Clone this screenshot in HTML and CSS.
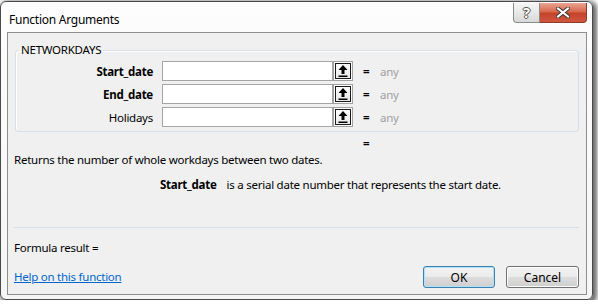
FILE: index.html
```html
<!DOCTYPE html>
<html lang="en">
<head>
  <meta charset="UTF-8">
  <title>Function Arguments</title>
  <link rel="stylesheet" href="styles.css">
</head>
<body>
  <div class="window">
    <!-- Title bar -->
    <div class="titlebar">
      <span class="title">Function Arguments</span>
      <div class="caption-buttons">
        <span class="cap-btn help-btn">?</span>
        <span class="cap-btn close-btn">
          <svg width="14" height="11" viewBox="0 0 14 11">
            <path d="M2 1.5 L12 9.5 M12 1.5 L2 9.5" stroke="#3a3a3a" stroke-width="4" stroke-linecap="square"/>
            <path d="M2 1.5 L12 9.5 M12 1.5 L2 9.5" stroke="#fff" stroke-width="2" stroke-linecap="square"/>
          </svg>
        </span>
      </div>
    </div>

    <div class="client">
      <fieldset class="args">
        <legend>NETWORKDAYS</legend>
        <div class="arg-row">
          <span class="arg-name bold">Start_date</span>
          <div class="arg-input">
            <span class="field"></span>
            <span class="ref-btn"><span class="ref-inner">
              <svg width="10" height="12" viewBox="0 0 10 12"><path d="M5 0 L9.5 5 L6.5 5 L6.5 9 L3.5 9 L3.5 5 L0.5 5 Z" fill="#000"/><rect x="0.5" y="10.5" width="9" height="1.5" fill="#000"/></svg>
            </span></span>
          </div>
          <span class="eq">=</span>
          <span class="arg-value">any</span>
        </div>
        <div class="arg-row">
          <span class="arg-name bold">End_date</span>
          <div class="arg-input">
            <span class="field"></span>
            <span class="ref-btn"><span class="ref-inner">
              <svg width="10" height="12" viewBox="0 0 10 12"><path d="M5 0 L9.5 5 L6.5 5 L6.5 9 L3.5 9 L3.5 5 L0.5 5 Z" fill="#000"/><rect x="0.5" y="10.5" width="9" height="1.5" fill="#000"/></svg>
            </span></span>
          </div>
          <span class="eq">=</span>
          <span class="arg-value">any</span>
        </div>
        <div class="arg-row">
          <span class="arg-name">Holidays</span>
          <div class="arg-input">
            <span class="field"></span>
            <span class="ref-btn"><span class="ref-inner">
              <svg width="10" height="12" viewBox="0 0 10 12"><path d="M5 0 L9.5 5 L6.5 5 L6.5 9 L3.5 9 L3.5 5 L0.5 5 Z" fill="#000"/><rect x="0.5" y="10.5" width="9" height="1.5" fill="#000"/></svg>
            </span></span>
          </div>
          <span class="eq">=</span>
          <span class="arg-value">any</span>
        </div>
      </fieldset>

      <div class="result-eq">=</div>
      <p class="desc">Returns the number of whole workdays between two dates.</p>
      <p class="arg-help"><b>Start_date</b><span>is a serial date number that represents the start date.</span></p>

      <div class="sep"></div>

      <div class="formula">Formula result =</div>
      <div class="footer">
        <a href="#" class="help-link">Help on this function</a>
        <div class="buttons">
          <button class="btn btn-default">OK</button>
          <button class="btn">Cancel</button>
        </div>
      </div>
    </div>
  </div>
</body>
</html>
```

FILE: styles.css
```css
/* Page */
body {
  margin: 0;
  padding: 1px 0 0 0;
  background: #fff;
  font-family: "Noto Sans", "Open Sans", sans-serif;
  font-size: 11.5px;
  letter-spacing: -0.25px;
  color: #000;
}

/* Dialog frame */
.window {
  width: 593px;
  height: 299px;
  box-sizing: border-box;
  border: 1px solid #4a4a4a;
  border-radius: 6px;
  background: linear-gradient(#fdfdfd, #f6f6f6);
  padding: 0 5px 4px 6px;
  box-shadow: 2px 2px 5px 2px rgba(0, 0, 0, 0.6);
  display: flex;
  flex-direction: column;
}

.titlebar {
  height: 30px;
  display: flex;
  justify-content: space-between;
  align-items: flex-start;
}

.title {
  margin-top: 10px;
  margin-left: 2px;
  line-height: 16px;
  font-size: 12px;
}

.caption-buttons {
  display: flex;
  margin-top: 1px;
}

.cap-btn {
  height: 20px;
  box-sizing: border-box;
  display: flex;
  align-items: center;
  justify-content: center;
}

.help-btn {
  width: 27px;
  border: 1px solid #8a8a8a;
  border-top: none;
  border-radius: 0 0 0 4px;
  background: linear-gradient(#f6f6f6, #d9d9d9);
  font-weight: bold;
  font-size: 14px;
  color: #fff;
  text-shadow: 1px 0 0 #555, -1px 0 0 #555, 0 1px 0 #555, 0 -1px 0 #555;
}

.close-btn {
  width: 47px;
  border: 1px solid #8c3a2a;
  border-top: none;
  border-left: none;
  border-radius: 0 0 4px 0;
  background: linear-gradient(#eaa593 0%, #d8694f 45%, #c4432b 55%, #d0573f 100%);
}

/* Client area */
.client {
  flex: 1;
  border: 1px solid #8e8e8e;
  background: #f0f0f0;
  display: flex;
  flex-direction: column;
}

/* Argument group box */
.args {
  margin: 9px 7px 0 7px;
  padding: 3px 0 4px 0;
  border: 1px solid #d5dfe5;
  border-radius: 3px;
  box-shadow: inset 1px 1px 0 #fff;
  display: flex;
  flex-direction: column;
  gap: 3px;
}

.args legend {
  margin-left: 3px;
  padding: 0 2px;
  line-height: 16px;
}

.arg-row {
  display: flex;
  align-items: center;
  height: 20px;
}

.arg-name {
  width: 137px;
  margin-right: 9px;
  text-align: right;
}

.bold {
  font-weight: bold;
}

.arg-input {
  width: 191px;
  height: 20px;
  display: flex;
}

.field {
  flex: 1;
  border: 1px solid #a5a5a5;
  background: #fff;
}

.ref-btn {
  width: 20px;
  height: 20px;
  box-sizing: border-box;
  border: 1px solid #a0a0a0;
  padding: 1px;
  background: #fff;
}

.ref-inner {
  display: flex;
  align-items: center;
  justify-content: center;
  height: 100%;
  box-sizing: border-box;
  border: 1px solid #1a1a1a;
  background: linear-gradient(#fdfdfd, #e8e8e8);
}

.eq {
  margin-left: 10px;
  width: 17px;
  font-weight: bold;
}

.arg-value {
  color: #a0a0a0;
}

/* Description text */
.result-eq {
  margin: 4px 0 0 355px;
  line-height: 16px;
  font-weight: bold;
}

.desc {
  margin: 0 0 0 6px;
  line-height: 16px;
}

.arg-help {
  margin: 9px 0 0 152px;
  line-height: 16px;
}

.arg-help span {
  margin-left: 10px;
}

.sep {
  margin: 34px 7px 0 6px;
  height: 1px;
  background: #d5dfe5;
}

.formula {
  margin: 12px 0 0 6px;
  line-height: 16px;
}

.footer {
  display: flex;
  justify-content: space-between;
  align-items: center;
  margin: 10px 7px 0 6px;
}

.help-link {
  color: #0066cc;
  text-decoration: underline;
  line-height: 16px;
}

.buttons {
  display: flex;
  gap: 11px;
}

.btn {
  width: 73px;
  height: 22px;
  font-family: inherit;
  font-size: 12px;
  color: #000;
  border: 1px solid #707070;
  border-radius: 3px;
  background: linear-gradient(#f2f2f2 0%, #ebebeb 50%, #dddddd 51%, #cfcfcf 100%);
  box-shadow: inset 0 0 0 1px #fcfcfc;
  padding: 0;
}

.btn-default {
  width: 72px;
  border-color: #3c7fb1;
  box-shadow: inset 0 0 0 1px #aee2fa;
}
```
